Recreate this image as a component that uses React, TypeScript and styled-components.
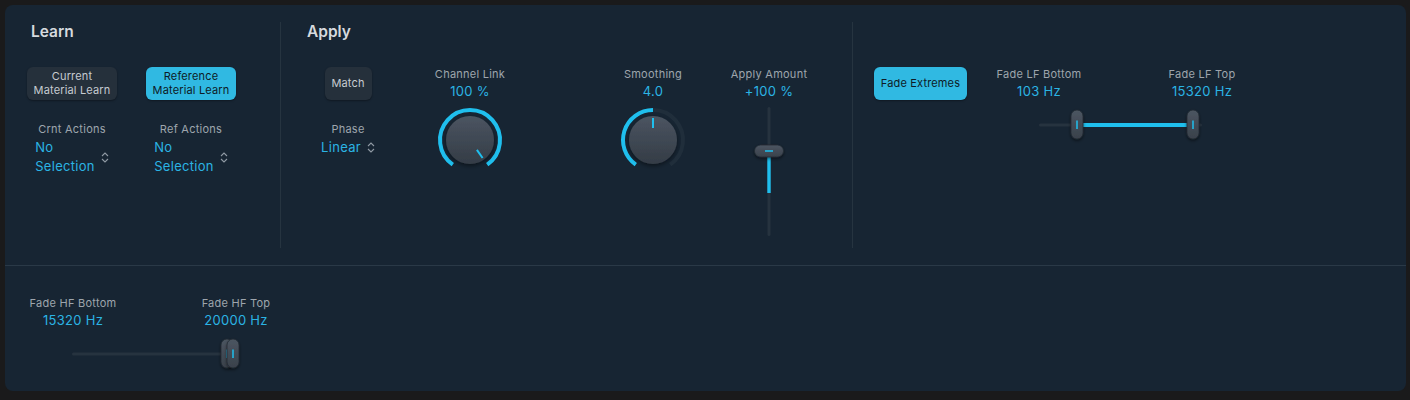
import styled, { createGlobalStyle } from 'styled-components';

const GlobalStyle = createGlobalStyle`
  body {
    margin: 0;
    background: #1a1a1b;
    font-family: Inter, "Noto Sans", sans-serif;
  }
`;

const Panel = styled.div`
  margin: 5px 0 0 5px;
  width: 1401px;
  height: 386px;
  border-radius: 8px;
  background: #172533;
  overflow: hidden;
  display: flex;
  flex-direction: column;
`;

const TopRow = styled.div`
  display: flex;
  height: 260px;
  border-bottom: 1px solid #2a3947;
`;

const Section = styled.div<{ $w?: number; $pl: number; $pt?: number }>`
  box-sizing: border-box;
  width: ${(p) => (p.$w ? `${p.$w}px` : 'auto')};
  flex: ${(p) => (p.$w ? 'none' : '1')};
  padding: ${(p) => p.$pt ?? 17}px 0 0 ${(p) => p.$pl}px;
`;

const Divider = styled.div`
  width: 1px;
  margin: 17px 0;
  background: #263440;
`;

const Heading = styled.div<{ $indent?: number }>`
  font-size: 15.5px;
  line-height: 20px;
  font-weight: 600;
  color: #d6dade;
  margin-bottom: 25px;
  padding-left: ${(p) => p.$indent ?? 0}px;
`;

const LearnGrid = styled.div`
  display: grid;
  grid-template-columns: 90px 90px;
  column-gap: 29px;
`;

const Row = styled.div`
  display: flex;
  align-items: flex-start;
`;

const Column = styled.div<{ $w: number; $ml?: number }>`
  display: flex;
  flex-direction: column;
  align-items: center;
  width: ${(p) => p.$w}px;
  margin-left: ${(p) => p.$ml ?? 0}px;
`;

const Button = styled.div<{ $active?: boolean; $w: number }>`
  box-sizing: border-box;
  width: ${(p) => p.$w}px;
  height: 33px;
  border-radius: 6px;
  display: flex;
  align-items: center;
  justify-content: center;
  text-align: center;
  font-size: 11px;
  line-height: 13.5px;
  letter-spacing: 0.15px;
  background: ${(p) => (p.$active ? '#30b9e2' : '#25303b')};
  color: ${(p) => (p.$active ? '#0e1b26' : '#c6cbd1')};
  box-shadow: 0 1px 2px rgba(0, 0, 0, 0.35);
`;

const Label = styled.div<{ $mt?: number }>`
  font-size: 11px;
  line-height: 14px;
  letter-spacing: 0.25px;
  color: #9ea5ad;
  white-space: nowrap;
  margin-top: ${(p) => p.$mt ?? 0}px;
`;

const Value = styled.div`
  font-size: 13px;
  line-height: 20px;
  letter-spacing: 0.3px;
  color: #2bb4e4;
  white-space: nowrap;
`;

const Selector = styled.div`
  display: flex;
  align-items: center;
  gap: 6px;
  margin-top: 2px;
`;

const SelectorText = styled.div<{ $wrap?: boolean }>`
  font-size: 13px;
  line-height: 19px;
  letter-spacing: 0.3px;
  color: #2bb4e4;
  width: ${(p) => (p.$wrap ? 'min-content' : 'auto')};
`;

const Drawing = styled.svg<{ $mt?: number; $ml?: number }>`
  display: block;
  margin-top: ${(p) => p.$mt ?? 0}px;
  margin-left: ${(p) => p.$ml ?? 0}px;
  overflow: visible;
`;

const RangeGroup = styled.div<{ $ml?: number }>`
  margin-left: ${(p) => p.$ml ?? 0}px;
  display: flex;
  flex-direction: column;
`;

const LabelPair = styled.div`
  display: grid;
  grid-template-columns: 120px 120px;
  column-gap: 43px;
  justify-items: center;
`;

const BottomArea = styled.div`
  padding: 30px 0 0 8px;
`;

const BLUE = '#1fbfee';

const Stepper = () => (
  <svg width="8" height="13" viewBox="0 0 8 13">
    <path d="M1 5 L4 2 L7 5 M1 8 L4 11 L7 8" fill="none" stroke="#8e98a2" strokeWidth="1.1" />
  </svg>
);

const polar = (cx: number, cy: number, r: number, a: number) => {
  const rad = (a * Math.PI) / 180;
  return [cx + r * Math.sin(rad), cy - r * Math.cos(rad)];
};

const arc = (cx: number, cy: number, r: number, a0: number, a1: number) => {
  const [x0, y0] = polar(cx, cy, r, a0);
  const [x1, y1] = polar(cx, cy, r, a1);
  const large = a1 - a0 > 180 ? 1 : 0;
  return `M${x0} ${y0} A${r} ${r} 0 ${large} 1 ${x1} ${y1}`;
};

function Knob({ angle, id }: { angle: number; id: string }) {
  const [ix0, iy0] = polar(36, 36, 12, angle);
  const [ix1, iy1] = polar(36, 36, 22, angle);
  return (
    <Drawing width="72" height="72" viewBox="0 0 72 72" $mt={3}>
      <defs>
        <linearGradient id={`${id}-g`} x1="0" y1="0" x2="0" y2="1">
          <stop offset="0" stopColor="#4b5461" />
          <stop offset="1" stopColor="#343c46" />
        </linearGradient>
        <filter id={`${id}-s`} x="-50%" y="-50%" width="200%" height="200%">
          <feDropShadow dx="0" dy="2" stdDeviation="2" floodColor="#000" floodOpacity="0.45" />
        </filter>
      </defs>
      <path d={arc(36, 36, 30, -145, 145)} fill="none" stroke="#202e3b" strokeWidth="4" />
      <path d={arc(36, 36, 30, -145, angle)} fill="none" stroke={BLUE} strokeWidth="4" />
      <circle cx="36" cy="36" r="24" fill={`url(#${id}-g)`} filter={`url(#${id}-s)`} />
      <line x1={ix0} y1={iy0} x2={ix1} y2={iy1} stroke={BLUE} strokeWidth="2" />
    </Drawing>
  );
}

function Thumb({ x, y, w, h, id }: { x: number; y: number; w: number; h: number; id: string }) {
  return (
    <rect
      x={x}
      y={y}
      width={w}
      height={h}
      rx={Math.min(w, h) / 2}
      fill={`url(#${id}-g)`}
      stroke="#222b34"
      strokeWidth="0.8"
      filter={`url(#${id}-s)`}
    />
  );
}

function ThumbDefs({ id }: { id: string }) {
  return (
    <defs>
      <linearGradient id={`${id}-g`} x1="0" y1="0" x2="0" y2="1">
        <stop offset="0" stopColor="#4c5561" />
        <stop offset="1" stopColor="#39414b" />
      </linearGradient>
      <filter id={`${id}-s`} x="-60%" y="-60%" width="220%" height="220%">
        <feDropShadow dx="0" dy="1.5" stdDeviation="1.5" floodColor="#000" floodOpacity="0.5" />
      </filter>
    </defs>
  );
}

function VerticalSlider() {
  return (
    <Drawing width="34" height="136" viewBox="0 0 34 136" $mt={3}>
      <ThumbDefs id="vs" />
      <rect x="15.5" y="3" width="3" height="129" rx="1.5" fill="#26333f" />
      <rect x="15.3" y="47" width="3.4" height="42" fill={BLUE} />
      <Thumb id="vs" x={2.5} y={41} w={29} h={12} />
      <line x1="13" y1="47" x2="21" y2="47" stroke={BLUE} strokeWidth="1.6" />
    </Drawing>
  );
}

function RangeSlider({ id, width, trackEnd, lo, hi, ml }: { id: string; width: number; trackEnd: number; lo: number; hi: number; ml: number }) {
  return (
    <Drawing width={width} height="41" viewBox={`0 0 ${width} 41`} $mt={3} $ml={ml}>
      <ThumbDefs id={id} />
      <rect x="10" y="19.5" width={trackEnd - 10} height="3" rx="1.5" fill="#26333f" />
      <rect x={lo} y="19" width={hi - lo} height="4" fill={BLUE} />
      <Thumb id={id} x={lo - 6} y={6} w={12} h={29} />
      <line x1={lo} y1="16.5" x2={lo} y2="25" stroke={BLUE} strokeWidth="1.5" />
      <Thumb id={id} x={hi - 6} y={6} w={12} h={29} />
      <line x1={hi} y1="16.5" x2={hi} y2="25" stroke={BLUE} strokeWidth="1.5" />
    </Drawing>
  );
}

function App() {
  return (
    <>
      <GlobalStyle />
      <Panel>
        <TopRow>
          <Section $w={275} $pl={22}>
            <Heading $indent={4}>Learn</Heading>
            <LearnGrid>
              <Column $w={90}>
                <Button $w={90}>
                  Current
                  <br />
                  Material Learn
                </Button>
                <Label $mt={22}>Crnt Actions</Label>
                <Selector>
                  <SelectorText $wrap>No Selection</SelectorText>
                  <Stepper />
                </Selector>
              </Column>
              <Column $w={90}>
                <Button $w={90} $active>
                  Reference
                  <br />
                  Material Learn
                </Button>
                <Label $mt={22}>Ref Actions</Label>
                <Selector>
                  <SelectorText $wrap>No Selection</SelectorText>
                  <Stepper />
                </Selector>
              </Column>
            </LearnGrid>
          </Section>
          <Divider />
          <Section $w={571} $pl={26}>
            <Heading>Apply</Heading>
            <Row>
              <Column $w={82}>
                <Button $w={47}>Match</Button>
                <Label $mt={22}>Phase</Label>
                <Selector>
                  <SelectorText>Linear</SelectorText>
                  <Stepper />
                </Selector>
              </Column>
              <Column $w={100} $ml={31}>
                <Label>Channel Link</Label>
                <Value>100 %</Value>
                <Knob id="cl" angle={145} />
              </Column>
              <Column $w={100} $ml={83}>
                <Label>Smoothing</Label>
                <Value>4.0</Value>
                <Knob id="sm" angle={0} />
              </Column>
              <Column $w={100} $ml={16}>
                <Label>Apply Amount</Label>
                <Value>+100 %</Value>
                <VerticalSlider />
              </Column>
            </Row>
          </Section>
          <Divider />
          <Section $pl={21} $pt={62}>
            <Row>
              <Button $w={93} $active>
                Fade Extremes
              </Button>
              <RangeGroup $ml={12}>
                <LabelPair>
                  <Column $w={120}>
                    <Label>Fade LF Bottom</Label>
                    <Value>103 Hz</Value>
                  </Column>
                  <Column $w={120}>
                    <Label>Fade LF Top</Label>
                    <Value>15320 Hz</Value>
                  </Column>
                </LabelPair>
                <RangeSlider id="lf" width={183} trackEnd={173} lo={48} hi={164} ml={50} />
              </RangeGroup>
            </Row>
          </Section>
        </TopRow>
        <BottomArea>
          <RangeGroup>
            <LabelPair>
              <Column $w={120}>
                <Label>Fade HF Bottom</Label>
                <Value>15320 Hz</Value>
              </Column>
              <Column $w={120}>
                <Label>Fade HF Top</Label>
                <Value>20000 Hz</Value>
              </Column>
            </LabelPair>
            <RangeSlider id="hf" width={183} trackEnd={171} lo={165} hi={171} ml={49} />
          </RangeGroup>
        </BottomArea>
      </Panel>
    </>
  );
}

export default App;
